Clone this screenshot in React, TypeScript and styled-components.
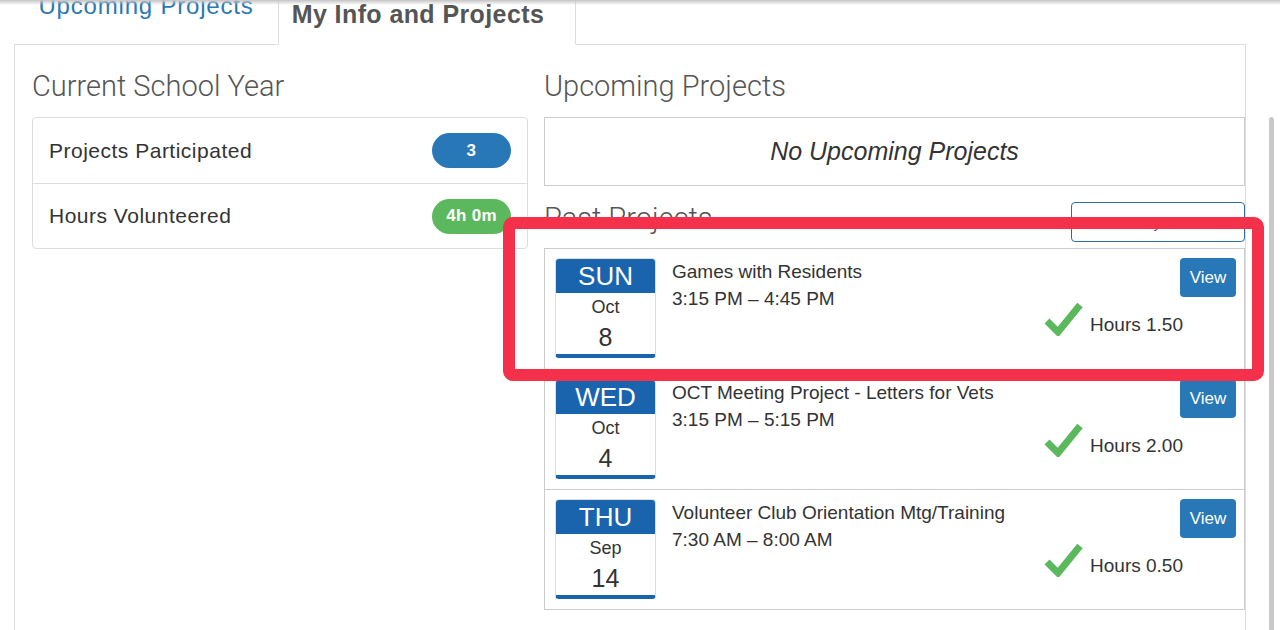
import React from "react";
import styled, { createGlobalStyle, css } from "styled-components";

const GlobalStyle = createGlobalStyle`
  html, body { margin: 0; padding: 0; background: #fff; }
  body { font-family: "Liberation Sans", Arial, sans-serif; color: #333; }
  * { box-sizing: border-box; }
`;

const Page = styled.div`
  position: relative;
  width: 1280px;
  height: 630px;
  overflow: hidden;
  padding: 0 34px 0 14px;
`;

const TopShadow = styled.div`
  position: absolute;
  left: 0;
  right: 0;
  top: 0;
  height: 5px;
  background: linear-gradient(#c4c4c4, rgba(255, 255, 255, 0));
  z-index: 3;
`;

const ScrollThumb = styled.div`
  position: absolute;
  left: 1269px;
  top: 117px;
  width: 5px;
  height: 540px;
  border-radius: 3px;
  background: #c9c9c9;
`;

const Annotation = styled.div`
  position: absolute;
  left: 503px;
  top: 217px;
  width: 761px;
  height: 164px;
  border: 12px solid #f5304a;
  border-radius: 10px;
  z-index: 4;
`;

const Tabs = styled.div`
  display: flex;
  align-items: flex-start;
  height: 45px;
  border-bottom: 1px solid #ddd;
`;

const Tab = styled.div<{ $active?: boolean; $w: number }>`
  width: ${(p) => p.$w}px;
  height: 45px;
  text-align: center;
  line-height: 26px;
  white-space: nowrap;
  ${(p) =>
    p.$active
      ? css`
          padding: 1px 18px 0 0;
          font-size: 25px;
          letter-spacing: 0.4px;
          color: #555;
          font-weight: bold;
          background: #fff;
          border: 1px solid #ddd;
          border-bottom-color: #fff;
          border-top: none;
        `
      : css`
          margin-top: -7px;
          font-size: 24px;
          letter-spacing: 0.8px;
          color: #2a78b3;
        `}
`;

const Panel = styled.div`
  border-left: 1px solid #ddd;
  border-right: 1px solid #ddd;
  height: 600px;
  padding: 25px 0 0 17px;
  display: flex;
  gap: 16px;
`;

const LeftCol = styled.div`
  width: 496px;
  flex: none;
`;

const RightCol = styled.div`
  flex: 1;
  min-width: 0;
`;

const Heading = styled.h2`
  margin: 0;
  font-family: Roboto, "Liberation Sans", sans-serif;
  font-weight: 300;
  font-size: 29px;
  line-height: 32px;
  color: #555;
`;

const SectionHeading = styled(Heading)`
  margin-bottom: 15px;
`;

const ListGroup = styled.div`
  border: 1px solid #ddd;
  border-radius: 4px;
`;

const ListRow = styled.div`
  height: 65px;
  display: flex;
  align-items: center;
  justify-content: space-between;
  padding: 0 16px;
  font-size: 21px;
  letter-spacing: 0.5px;
  color: #333;
  & + & {
    border-top: 1px solid #ddd;
  }
`;

const Badge = styled.span<{ $color: string }>`
  min-width: 79px;
  height: 35px;
  padding: 0 14px;
  border-radius: 18px;
  background: ${(p) => p.$color};
  color: #fff;
  font-weight: bold;
  font-size: 17px;
  letter-spacing: 0.3px;
  display: inline-flex;
  align-items: center;
  justify-content: center;
`;

const EmptyBox = styled.div`
  height: 69px;
  border: 1px solid #ccc;
  display: flex;
  align-items: center;
  justify-content: center;
  font-style: italic;
  font-size: 25px;
  color: #333;
`;

const PastHeader = styled.div`
  display: flex;
  justify-content: space-between;
  align-items: flex-start;
  padding-top: 16px;
  height: 62px;
`;

const OutlineButton = styled.button`
  width: 174px;
  height: 40px;
  border: 1px solid #2e6da4;
  border-radius: 4px;
  background: #fff;
  color: #666;
  font-family: "Liberation Sans", Arial, sans-serif;
  font-size: 15px;
  padding: 0;
`;

const ProjectList = styled.div`
  border: 1px solid #ccc;
`;

const ProjectItem = styled.div`
  height: 120px;
  display: flex;
  padding: 9px 8px 0 10px;
  & + & {
    border-top: 1px solid #ccc;
  }
`;

const DateCard = styled.div`
  width: 101px;
  height: 100px;
  flex: none;
  border: 1px solid #ddd;
  border-bottom: 4px solid #1a64ad;
  border-radius: 4px;
  overflow: hidden;
  text-align: center;
  display: flex;
  flex-direction: column;
`;

const DayName = styled.div`
  height: 34px;
  background: #1a64ad;
  color: #fff;
  font-size: 26px;
  line-height: 35px;
`;

const Month = styled.div`
  font-size: 18px;
  line-height: 18px;
  margin-top: 5px;
  color: #333;
`;

const DayNum = styled.div`
  font-size: 25px;
  line-height: 26px;
  margin-top: 8px;
  color: #333;
`;

const Info = styled.div`
  flex: 1;
  padding: 0 0 0 16px;
  font-size: 19px;
  line-height: 27px;
  color: #333;
`;

const Side = styled.div`
  display: flex;
  flex-direction: column;
  align-items: flex-end;
`;

const ViewButton = styled.button`
  width: 56px;
  height: 39px;
  border: none;
  border-radius: 4px;
  background: #2878b8;
  color: #fff;
  font-family: "Liberation Sans", Arial, sans-serif;
  font-size: 17px;
  padding: 0;
`;

const HoursRow = styled.div`
  display: flex;
  align-items: flex-start;
  gap: 7px;
  margin: 5px 53px 0 0;
  font-size: 19px;
  color: #333;
`;

const HoursText = styled.span`
  padding-top: 12px;
`;

const Check = () => (
  <svg width="38" height="34" viewBox="0 0 38 34">
    <path d="M2 19 L13 30 L35 3" fill="none" stroke="#5cb85c" strokeWidth="7" strokeLinejoin="miter" />
  </svg>
);

const projects = [
  { day: "SUN", month: "Oct", date: "8", title: "Games with Residents", time: "3:15 PM – 4:45 PM", hours: "1.50" },
  { day: "WED", month: "Oct", date: "4", title: "OCT Meeting Project - Letters for Vets", time: "3:15 PM – 5:15 PM", hours: "2.00" },
  { day: "THU", month: "Sep", date: "14", title: "Volunteer Club Orientation Mtg/Training", time: "7:30 AM – 8:00 AM", hours: "0.50" },
];

export default function App() {
  return (
    <Page>
      <GlobalStyle />
      <TopShadow />
      <Tabs>
        <Tab $w={264}>Upcoming Projects</Tab>
        <Tab $w={298} $active>My Info and Projects</Tab>
      </Tabs>
      <Panel>
        <LeftCol>
          <SectionHeading>Current School Year</SectionHeading>
          <ListGroup>
            <ListRow>
              Projects Participated
              <Badge $color="#2878b8">3</Badge>
            </ListRow>
            <ListRow>
              Hours Volunteered
              <Badge $color="#5cb85c">4h 0m</Badge>
            </ListRow>
          </ListGroup>
        </LeftCol>
        <RightCol>
          <SectionHeading>Upcoming Projects</SectionHeading>
          <EmptyBox>No Upcoming Projects</EmptyBox>
          <PastHeader>
            <Heading>Past Projects</Heading>
            <OutlineButton>Show only Attended</OutlineButton>
          </PastHeader>
          <ProjectList>
            {projects.map((p) => (
              <ProjectItem key={p.title}>
                <DateCard>
                  <DayName>{p.day}</DayName>
                  <Month>{p.month}</Month>
                  <DayNum>{p.date}</DayNum>
                </DateCard>
                <Info>
                  <div>{p.title}</div>
                  <div>{p.time}</div>
                </Info>
                <Side>
                  <ViewButton>View</ViewButton>
                  <HoursRow>
                    <Check />
                    <HoursText>Hours {p.hours}</HoursText>
                  </HoursRow>
                </Side>
              </ProjectItem>
            ))}
          </ProjectList>
        </RightCol>
      </Panel>
      <ScrollThumb />
      <Annotation />
    </Page>
  );
}
